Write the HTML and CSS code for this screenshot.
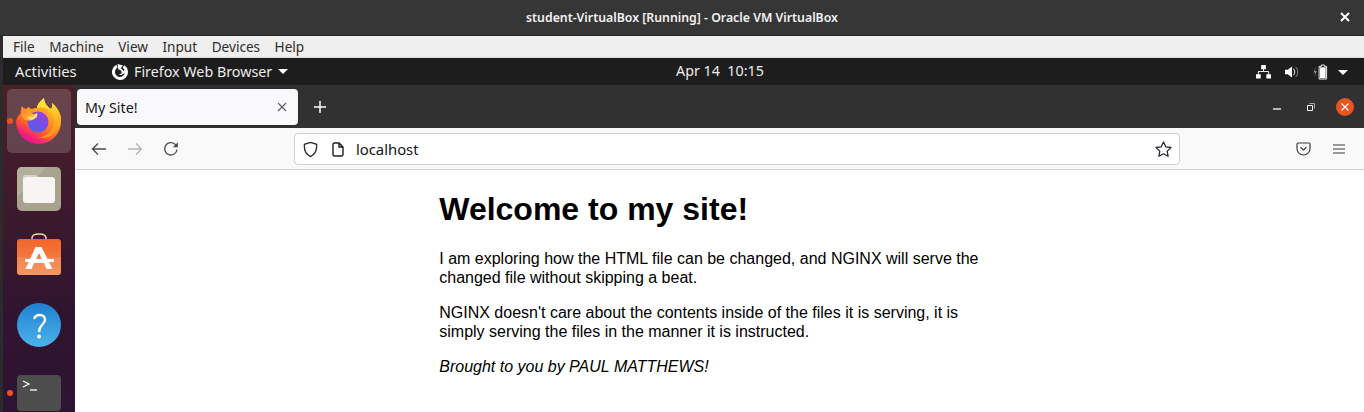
FILE: index.html
```html
<!DOCTYPE html>
<html lang="en">
<head>
<meta charset="utf-8">
<title>student-VirtualBox [Running] - Oracle VM VirtualBox</title>
<link rel="stylesheet" href="styles.css">
</head>
<body>
<div class="vm">
  <header class="titlebar">
    <span class="title-text">student-VirtualBox [Running] - Oracle VM VirtualBox</span>
    <svg class="title-close" width="10" height="10" viewBox="0 0 10 10"><path d="M1 1l8 8M9 1l-8 8" stroke="#fff" stroke-width="2"/></svg>
  </header>
  <nav class="menubar">
    <span>File</span><span>Machine</span><span>View</span><span>Input</span><span>Devices</span><span>Help</span>
  </nav>
  <div class="screen">
    <div class="panel">
      <span class="activities">Activities</span>
      <div class="app-menu">
        <svg width="16" height="16" viewBox="0 0 16 16"><path d="M5 2.200A6.500 6.500 0 1 0 11.500 2.500" fill="none" stroke="#fff" stroke-width="3"/><path d="M5.500 0 11 1.500 8.500 4.500C9.800 4.700 11 5.800 11.300 7.200L14 4c1 1.500 1 3 .5 5l-3.500 1c-1 1-3.200 1.300-4.500.3 1.600.1 3-.6 3.200-2.100-.3-1.500-1.500-2.700-3.200-2.700z" fill="#fff"/></svg>
        <span>Firefox Web Browser</span>
        <i class="caret"></i>
      </div>
      <time class="clock">Apr 14&nbsp;&nbsp;10:15</time>
      <div class="tray">
        <svg width="15" height="14" viewBox="0 0 16 15"><path d="M5.500 0h5v4.500h-5zM0 10h5v4.500H0zM11 10h5v4.500h-5z" fill="#fff"/><path d="M8 4v3M2.500 10V7h11v3" stroke="#fff" fill="none"/></svg>
        <svg class="tray-vol" width="14" height="14" viewBox="0 0 15 14"><path d="M0 4.500h3L7.500 1v12L3 9.500H0z" fill="#fff"/><path d="M9 3.500a5 5 0 0 1 0 7" stroke="#fff" fill="none"/><path d="M11.500 1.500a8 8 0 0 1 0 11" stroke="#8a8a8a" fill="none"/></svg>
        <svg class="tray-bat" width="15" height="16" viewBox="0 0 16 16"><path d="M3 2 .5 8.500H2.500L1.500 14 4 7H2z" fill="#8c8c8c"/><path d="M9 .5h3v1.500h2.500v13.500h-8V2H9z" fill="none" stroke="#fff"/><path d="M7.500 3h6v11.500h-6z" fill="#fff"/></svg>
        <i class="caret"></i>
      </div>
    </div>
    <div class="desktop">
      <aside class="dock">
        <div class="dock-item running active">
          <svg class="ff-logo" width="46" height="46" viewBox="0 0 46 46">
            <defs>
              <linearGradient id="ffBody" gradientUnits="userSpaceOnUse" x1="38" y1="6" x2="16" y2="46">
                <stop offset="0" stop-color="#ffd52e"/><stop offset=".35" stop-color="#ff9a1f"/><stop offset=".68" stop-color="#ff5a2e"/><stop offset=".88" stop-color="#f5207a"/><stop offset="1" stop-color="#e6148f"/>
              </linearGradient>
              <linearGradient id="ffFlame" x1="0.3" y1="0" x2="0.6" y2="1">
                <stop offset="0" stop-color="#ffe93d"/><stop offset=".6" stop-color="#ffbc22"/><stop offset="1" stop-color="#ff8a1f"/>
              </linearGradient>
              <linearGradient id="ffGlobe" x1="0.75" y1="0" x2="0.25" y2="1">
                <stop offset="0" stop-color="#a23be0"/><stop offset="1" stop-color="#4a63e8"/>
              </linearGradient>
              <linearGradient id="ffSwoosh" x1="0" y1="0" x2="1" y2="0.5">
                <stop offset="0" stop-color="#ff7a1f"/><stop offset="1" stop-color="#ffc23a"/>
              </linearGradient>
            </defs>
            <path d="M6 8C5 10 5 12 6 14 2 18 0 20 0 24A22.500 22.500 0 0 0 45 23C45.500 17 42 10 36 5 36.500 8 36 10 35 11 32 9 28 5 28 0 24 3 21 7 21 10 19 10 17 10.500 16 11 14 11 13 10 13 8.500 11 11 8 12 6 8z" fill="url(#ffBody)"/>
            <path d="M28 0C24 3 21 7 21 10 27 8 34 11 37 17 40 23 38 31 32 36 29 38 26 39 23 39.500 33 42 43 35 45 24 45.500 17 42 10 36 5 36.500 8 36 10 35 11 32 9 28 5 28 0z" fill="url(#ffFlame)"/>
            <circle cx="22" cy="24" r="10.500" fill="url(#ffGlobe)"/>
            <path d="M21 10C27 9 33 13 34 20 31 15 26 13 21 13z" fill="#ffa31f"/>
            <path d="M6 9C4 13 4 18 8 21 11 23 15 23 18 21 20 20 22 18 21 15 19 17 15 16 14 14 13 13 13 11 13 9 11 12 8 13 6 9z" fill="url(#ffSwoosh)"/>
            <path d="M11 18C14 20 18 19 21 15 22 18 20 20 18 21 15 23 12 21 11 18z" fill="#ffe27a"/>
          </svg>
        </div>
        <div class="dock-item">
          <svg width="44" height="44" viewBox="0 0 44 44">
            <rect width="44" height="44" rx="5" fill="#a8a38f"/>
            <path d="M0 5a5 5 0 0 1 5-5h25L0 30z" fill="#b4b09d"/>
            <path d="M6 11a3 3 0 0 1 3-3h8c2 0 3 2 5 2h13a3 3 0 0 1 3 3v20a3 3 0 0 1-3 3H9a3 3 0 0 1-3-3z" fill="#f6f5f3"/>
            <path d="M6 11a3 3 0 0 1 3-3h8c2 0 3 2 5 2H11c-3 0-5 1-5 3z" fill="#d5d2c6"/>
          </svg>
        </div>
        <div class="dock-item">
          <svg width="44" height="48" viewBox="0 0 44 48">
            <defs><linearGradient id="storeBg" x1="0" y1="0" x2="0" y2="1"><stop offset="0" stop-color="#f2652a"/><stop offset="1" stop-color="#f58a50"/></linearGradient></defs>
            <path d="M15 7V5C15 2.500 18 1 22 1s7 1.500 7 4V7" fill="none" stroke="#f7d3b5" stroke-width="1.500"/>
            <rect y="6" width="44" height="36" rx="3" fill="url(#storeBg)"/>
            <path d="M0 24h44v15a3 3 0 0 1-3 3H3a3 3 0 0 1-3-3z" fill="#fff" opacity=".1"/>
            <path d="M18.500 14h6l11 22h-6l-2.500-6H17l-2.500 6h-6zM22 20 19 26.500h6z" fill="#fff" fill-rule="evenodd"/>
            <path d="M8 26h29v3H8z" fill="#fff"/>
          </svg>
        </div>
        <div class="dock-item">
          <svg width="44" height="44" viewBox="0 0 44 44">
            <defs><linearGradient id="helpBg" x1="0" y1="0" x2="0" y2="1"><stop offset="0" stop-color="#1f80d2"/><stop offset="1" stop-color="#4eb2ea"/></linearGradient></defs>
            <circle cx="22" cy="22" r="22" fill="url(#helpBg)"/>
            <path d="M17 16C18 13 20 12 22.500 12 26 12 28 14 28 17 28 21 22 22 22 29" fill="none" stroke="#fff" stroke-width="2.300"/>
            <circle cx="22" cy="33.500" r="2" fill="#fff"/>
          </svg>
        </div>
        <div class="dock-item running">
          <svg width="44" height="36" viewBox="0 0 44 36">
            <rect width="44" height="36" rx="4" fill="#4d4d4d"/>
            <path d="M6 6l6 3-6 3" fill="none" stroke="#fff" stroke-width="1.200"/>
            <path d="M13 15h7" stroke="#fff" stroke-width="1.300"/>
          </svg>
        </div>
      </aside>
      <section class="firefox">
        <div class="tabbar">
          <div class="tab">
            <span>My Site!</span>
            <svg width="10" height="10" viewBox="0 0 10 10"><path d="M1 1l8 8M9 1l-8 8" stroke="#5b5b66" stroke-width="1.100"/></svg>
          </div>
          <svg class="newtab" width="12" height="12" viewBox="0 0 12 12"><path d="M6 0v12M0 6h12" stroke="#fbfbfe" stroke-width="1.500"/></svg>
          <div class="winctl">
            <svg class="win-min" width="8" height="2" viewBox="0 0 8 2"><path d="M0 1h8" stroke="#fff" stroke-width="1.300"/></svg>
            <svg class="win-max" width="8" height="8" viewBox="0 0 8 8"><path d="M.5 2.500h5v5h-5z" fill="none" stroke="#fff"/><path d="M2.500.5h5v5" fill="none" stroke="#aaa"/></svg>
            <span class="winclose"><svg width="8" height="8" viewBox="0 0 8 8"><path d="M.5.5l7 7M7.500.5l-7 7" stroke="#fff" stroke-width="1.200"/></svg></span>
          </div>
        </div>
        <div class="navbar">
          <div class="nav-btns">
            <svg width="16" height="16" viewBox="0 0 16 16"><path d="M15 8H1.500M7 2.500 1.500 8 7 13.500" fill="none" stroke="#4a4a50" stroke-width="1.300"/></svg>
            <svg width="16" height="16" viewBox="0 0 16 16"><path d="M1 8h13.500M9 2.500 14.500 8 9 13.500" fill="none" stroke="#b5b5b8" stroke-width="1.300"/></svg>
            <svg width="16" height="16" viewBox="0 0 16 16"><path d="M14 8.500A6.200 6.200 0 1 1 12 3.200L14.500 5.500" fill="none" stroke="#4a4a50" stroke-width="1.300"/><path d="M14.800 1.200v5h-5z" fill="#4a4a50"/></svg>
          </div>
          <div class="urlbar">
            <svg width="15" height="17" viewBox="0 0 16 17"><path d="M8 1 14.500 3c.5 6-1 10.500-6.500 13C2.500 13.500 1 9 1.500 3z" fill="none" stroke="#2b2a33" stroke-width="1.400"/></svg>
            <svg class="page-icon" width="12" height="15" viewBox="0 0 12 15"><path d="M1 2.500A1.500 1.500 0 0 1 2.500 1H7l4 4v7.500a1.500 1.500 0 0 1-1.500 1.500h-7A1.500 1.500 0 0 1 1 12.500zM7 1v4h4" fill="none" stroke="#1c1b22" stroke-width="1.400"/></svg>
            <span class="url">localhost</span>
            <svg class="star" width="17" height="16" viewBox="0 0 17 16"><path d="M8.500 1l2.300 4.800 5.200.7-3.800 3.600.9 5.200-4.600-2.500-4.600 2.500.9-5.200L1 6.500l5.200-.7z" fill="none" stroke="#2b2a33" stroke-width="1.300" stroke-linejoin="round"/></svg>
          </div>
          <div class="nav-end">
            <svg width="15" height="14" viewBox="0 0 15 14"><path d="M1 2.200C1 1.500 1.500 1 2.200 1h10.600c.7 0 1.200.5 1.200 1.200V6.500a6.500 6.500 0 0 1-13 0z" fill="none" stroke="#3a3a40" stroke-width="1.200"/><path d="M4.500 5.200 7.500 8l3-2.800" fill="none" stroke="#3a3a40" stroke-width="1.200"/></svg>
            <svg width="12" height="10" viewBox="0 0 12 10"><path d="M0 1h12M0 5h12M0 9h12" stroke="#3a3a40" stroke-width="1.200"/></svg>
          </div>
        </div>
        <main class="page">
          <div class="page-body">
            <h1>Welcome to my site!</h1>
            <p>I am exploring how the HTML file can be changed, and NGINX will serve the changed file without skipping a beat.</p>
            <p>NGINX doesn't care about the contents inside of the files it is serving, it is simply serving the files in the manner it is instructed.</p>
            <p><em>Brought to you by PAUL MATTHEWS!</em></p>
          </div>
        </main>
      </section>
    </div>
  </div>
</div>
</body>
</html>
```
FILE: styles.css
```css
* { box-sizing: border-box; }
html, body { margin: 0; height: 100%; }
body { overflow: hidden; background: #2b2b2b; font-family: "Noto Sans", "Open Sans", sans-serif; }
.vm { width: 1364px; height: 412px; display: flex; flex-direction: column; overflow: hidden; }

.titlebar { height: 36px; flex: none; background: #363636; border-bottom: 1px solid #262626; display: flex; align-items: center; justify-content: center; position: relative; color: #f2f2f2; font-size: 12.300px; font-weight: 600; }
.title-close { position: absolute; right: 14px; top: 12px; }

.menubar { height: 22px; flex: none; margin-left: 3px; background: #efefef; border-bottom: 1px solid #dcdcdc; display: flex; align-items: center; gap: 14.500px; padding-left: 10px; font-size: 13.600px; color: #2d2d2d; }

.screen { flex: 1; margin-left: 3px; min-height: 0; display: flex; flex-direction: column; }
.panel { height: 27px; flex: none; background: #1d1d1d; color: #ececec; font-size: 14.300px; display: flex; align-items: center; position: relative; padding-left: 12px; }
.activities { width: 97px; font-size: 14.800px; margin-bottom: 2px; }
.app-menu { display: flex; align-items: center; gap: 6px; }
.caret { display: block; width: 0; height: 0; border-left: 5px solid transparent; border-right: 5px solid transparent; border-top: 5px solid #fff; }
.clock { position: absolute; left: 673px; top: 3px; }
.tray { position: absolute; right: 16px; top: 6px; display: flex; align-items: center; }
.tray-vol { margin-left: 14px; }
.tray-bat { margin-left: 14px; }
.tray .caret { margin-left: 10px; }

.desktop { flex: 1; display: flex; min-height: 0; }
.dock { width: 72px; flex: none; padding-top: 2px; background: linear-gradient(#4b2029, #30142f 70%, #2e1433); overflow: hidden; }
.dock-item { height: 68px; display: flex; align-items: center; justify-content: center; position: relative; }
.dock-item.active::before { content: ""; position: absolute; left: 4px; top: 2px; width: 64px; height: 64px; border-radius: 5px; background: rgba(255, 255, 255, 0.17); }
.dock-item svg { position: relative; }
.dock-item.running::after { content: ""; position: absolute; left: 4px; top: 31px; width: 6px; height: 6px; border-radius: 50%; background: #e95420; }

.firefox { flex: 1; min-width: 0; display: flex; flex-direction: column; background: #fff; }
.tabbar { height: 43px; flex: none; background: #313131; display: flex; align-items: flex-start; padding: 4px 0 0 2px; position: relative; }
.tab { width: 221px; height: 36px; background: #f9f9fb; border-radius: 4px; box-shadow: 0 0 2px rgba(0, 0, 0, .4); display: flex; align-items: center; justify-content: space-between; padding: 0 11px 0 8px; font-size: 14.300px; color: #15141a; }
.newtab { margin: 12px 0 0 16px; }
.winctl { position: absolute; right: 10px; top: 13px; display: flex; align-items: center; }
.win-min { margin-top: 4px; }
.win-max { margin-left: 26px; }
.winclose { margin-left: 21px; width: 18px; height: 18px; border-radius: 50%; background: #e95420; display: flex; align-items: center; justify-content: center; }

.navbar { height: 42px; flex: none; background: #f9f9f9; border-bottom: 1px solid #cfcfd8; display: flex; align-items: center; padding: 1px 19px 0 16px; }
.nav-btns { width: 203px; display: flex; gap: 20px; }
.urlbar { width: 886px; height: 32px; background: #fff; border: 1px solid #cfcfd8; border-radius: 4px; display: flex; align-items: center; padding: 0 7px 0 8px; font-size: 14.800px; color: #15141a; }
.page-icon { margin-left: 14px; }
.url { margin-left: 12px; flex: 1; }
.nav-end { margin-left: auto; display: flex; align-items: center; gap: 22px; }

.page { flex: 1; min-height: 0; overflow: hidden; background: #fff; }
.page-body { width: 560.500px; margin: 0 auto; padding-top: 21px; font: 16px/19px "Liberation Sans", Arial, sans-serif; color: #000; }
.page-body h1 { font-size: 32px; line-height: 37px; font-weight: 700; margin: 0 0 21px; }
.page-body p { margin: 0 0 16px; }
```
